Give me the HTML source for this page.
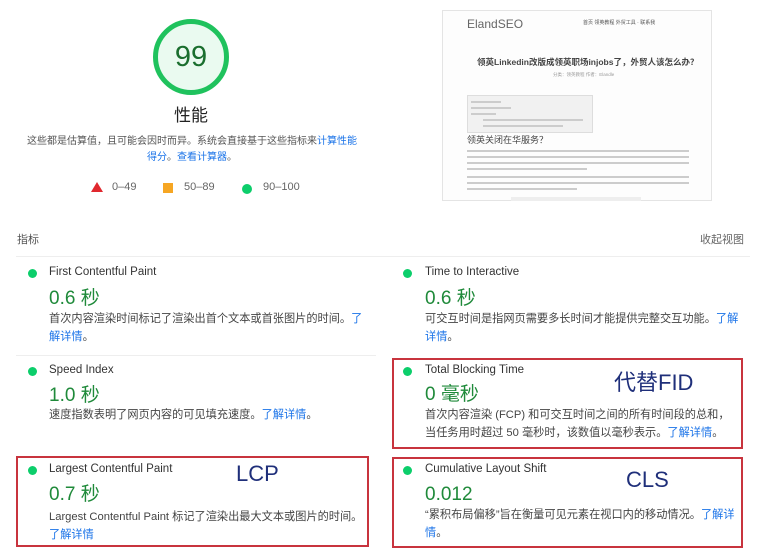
<!DOCTYPE html>
<html><head><meta charset="utf-8"><style>
*{margin:0;padding:0;box-sizing:border-box}
body{width:768px;height:556px;background:#fff;position:relative;overflow:hidden;font-family:"Liberation Sans","Noto Sans CJK SC",sans-serif;color:#333}
.a{position:absolute;white-space:nowrap;line-height:1.2}
.t{font-size:11.5px;color:#333}
.v{font-size:19px;color:#1f8a3a}
.d{font-size:11.2px;color:#444;line-height:18px}
.l{color:#1a73e8}
.dot{position:absolute;width:9px;height:9px;border-radius:50%;background:#0cce6b}
.box{position:absolute;border:2px solid #c8343e}
.big{font-size:22px;color:#1f2f7a}
.sep{position:absolute;height:1px;background:#eee}
.sl{position:absolute;height:2px;background:#ccc}
</style></head><body>
<div style="position:absolute;left:153px;top:19px;width:76px;height:76px;border-radius:50%;border:5px solid #1fc25d;background:#eafaf0"></div>
<div class="a" style="left:153px;top:40px;width:76px;text-align:center;font-size:29px;color:#1a6e2e">99</div>
<div class="a" style="left:153px;top:106px;width:76px;text-align:center;font-size:17px;color:#222">性能</div>
<div class="a" style="left:0;top:134px;width:384px;text-align:center;font-size:10px;color:#555;line-height:16px">这些都是估算值，且可能会因时而异。系统会直接基于这些指标来<span class="l">计算性能</span><br><span class="l">得分</span>。<span class="l">查看计算器</span>。</div>
<div class="a" style="left:91px;top:182px;width:0;height:0;border-left:6px solid transparent;border-right:6px solid transparent;border-bottom:10px solid #e0282e"></div>
<div class="a" style="left:112px;top:181px;font-size:11px;color:#666">0–49</div>
<div class="a" style="left:163px;top:183px;width:10px;height:10px;background:#f6a623"></div>
<div class="a" style="left:184px;top:181px;font-size:11px;color:#666">50–89</div>
<div class="dot" style="left:242px;top:184px;width:10px;height:10px"></div>
<div class="a" style="left:263px;top:181px;font-size:11px;color:#666">90–100</div>

<div style="position:absolute;left:442px;top:10px;width:270px;height:191px;border:1px solid #e4e4e4;background:#fdfdfd">
<div class="a" style="left:24px;top:6px;font-size:12px;color:#666">ElandSEO</div>
<div class="a" style="left:140px;top:9px;font-size:5px;color:#555">首页 领英教程 外贸工具 · 联系我</div>
<div class="a" style="left:34px;top:46px;font-size:8.5px;color:#444;font-weight:bold">领英Linkedin改版成领英职场injobs了，外贸人该怎么办？</div>
<div class="a" style="left:110px;top:61px;font-size:4.5px;color:#999">分类：领英教程 作者：Elandle</div>
<div style="position:absolute;left:24px;top:84px;width:126px;height:38px;background:#f1f1f1;border:1px solid #ddd"></div>
<div class="sl" style="left:28px;top:90px;width:30px"></div>
<div class="sl" style="left:28px;top:96px;width:40px"></div>
<div class="sl" style="left:28px;top:102px;width:25px"></div>
<div class="sl" style="left:40px;top:108px;width:100px"></div>
<div class="sl" style="left:40px;top:114px;width:80px"></div>
<div class="a" style="left:24px;top:124px;font-size:9px;color:#444">领英关闭在华服务？</div>
<div class="sl" style="left:24px;top:139px;width:222px"></div>
<div class="sl" style="left:24px;top:145px;width:222px"></div>
<div class="sl" style="left:24px;top:151px;width:222px"></div>
<div class="sl" style="left:24px;top:157px;width:120px"></div>
<div class="sl" style="left:24px;top:165px;width:222px"></div>
<div class="sl" style="left:24px;top:171px;width:222px"></div>
<div class="sl" style="left:24px;top:177px;width:110px"></div>
<div style="position:absolute;left:68px;top:186px;width:130px;height:4px;background:#eee"></div>
</div>

<div class="a" style="left:17px;top:234px;font-size:11px;color:#555">指标</div>
<div class="a" style="left:700px;top:234px;font-size:11px;color:#666">收起视图</div>
<div class="sep" style="left:16px;top:256px;width:734px"></div>

<div class="dot" style="left:28px;top:269px"></div>
<div class="a t" style="left:49px;top:266px">First Contentful Paint</div>
<div class="a v" style="left:49px;top:288px">0.6 秒</div>
<div class="a d" style="left:49px;top:310px">首次内容渲染时间标记了渲染出首个文本或首张图片的时间。<span class="l">了</span><br><span class="l">解详情</span>。</div>
<div class="sep" style="left:16px;top:355px;width:360px"></div>

<div class="dot" style="left:28px;top:367px"></div>
<div class="a t" style="left:49px;top:364px">Speed Index</div>
<div class="a v" style="left:49px;top:385px">1.0 秒</div>
<div class="a d" style="left:49px;top:406px">速度指数表明了网页内容的可见填充速度。<span class="l">了解详情</span>。</div>

<div class="box" style="left:16px;top:456px;width:353px;height:91px"></div>
<div class="dot" style="left:28px;top:466px"></div>
<div class="a t" style="left:49px;top:463px">Largest Contentful Paint</div>
<div class="a big" style="left:236px;top:461px">LCP</div>
<div class="a v" style="left:49px;top:484px">0.7 秒</div>
<div class="a d" style="left:49px;top:508px">Largest Contentful Paint 标记了渲染出最大文本或图片的时间。<br><span class="l">了解详情</span></div>

<div class="dot" style="left:403px;top:269px"></div>
<div class="a t" style="left:425px;top:266px">Time to Interactive</div>
<div class="a v" style="left:425px;top:288px">0.6 秒</div>
<div class="a d" style="left:425px;top:310px">可交互时间是指网页需要多长时间才能提供完整交互功能。<span class="l">了解</span><br><span class="l">详情</span>。</div>

<div class="box" style="left:392px;top:358px;width:351px;height:91px"></div>
<div class="dot" style="left:403px;top:367px"></div>
<div class="a t" style="left:425px;top:364px">Total Blocking Time</div>
<div class="a big" style="left:614px;top:370px">代替FID</div>
<div class="a v" style="left:425px;top:384px">0 毫秒</div>
<div class="a d" style="left:425px;top:406px">首次内容渲染 (FCP) 和可交互时间之间的所有时间段的总和，<br>当任务用时超过 50 毫秒时，该数值以毫秒表示。<span class="l">了解详情</span>。</div>

<div class="box" style="left:392px;top:457px;width:351px;height:91px"></div>
<div class="dot" style="left:403px;top:466px"></div>
<div class="a t" style="left:425px;top:463px">Cumulative Layout Shift</div>
<div class="a big" style="left:626px;top:467px">CLS</div>
<div class="a v" style="left:425px;top:484px">0.012</div>
<div class="a d" style="left:425px;top:506px">“累积布局偏移”旨在衡量可见元素在视口内的移动情况。<span class="l">了解详</span><br><span class="l">情</span>。</div>
</body></html>
